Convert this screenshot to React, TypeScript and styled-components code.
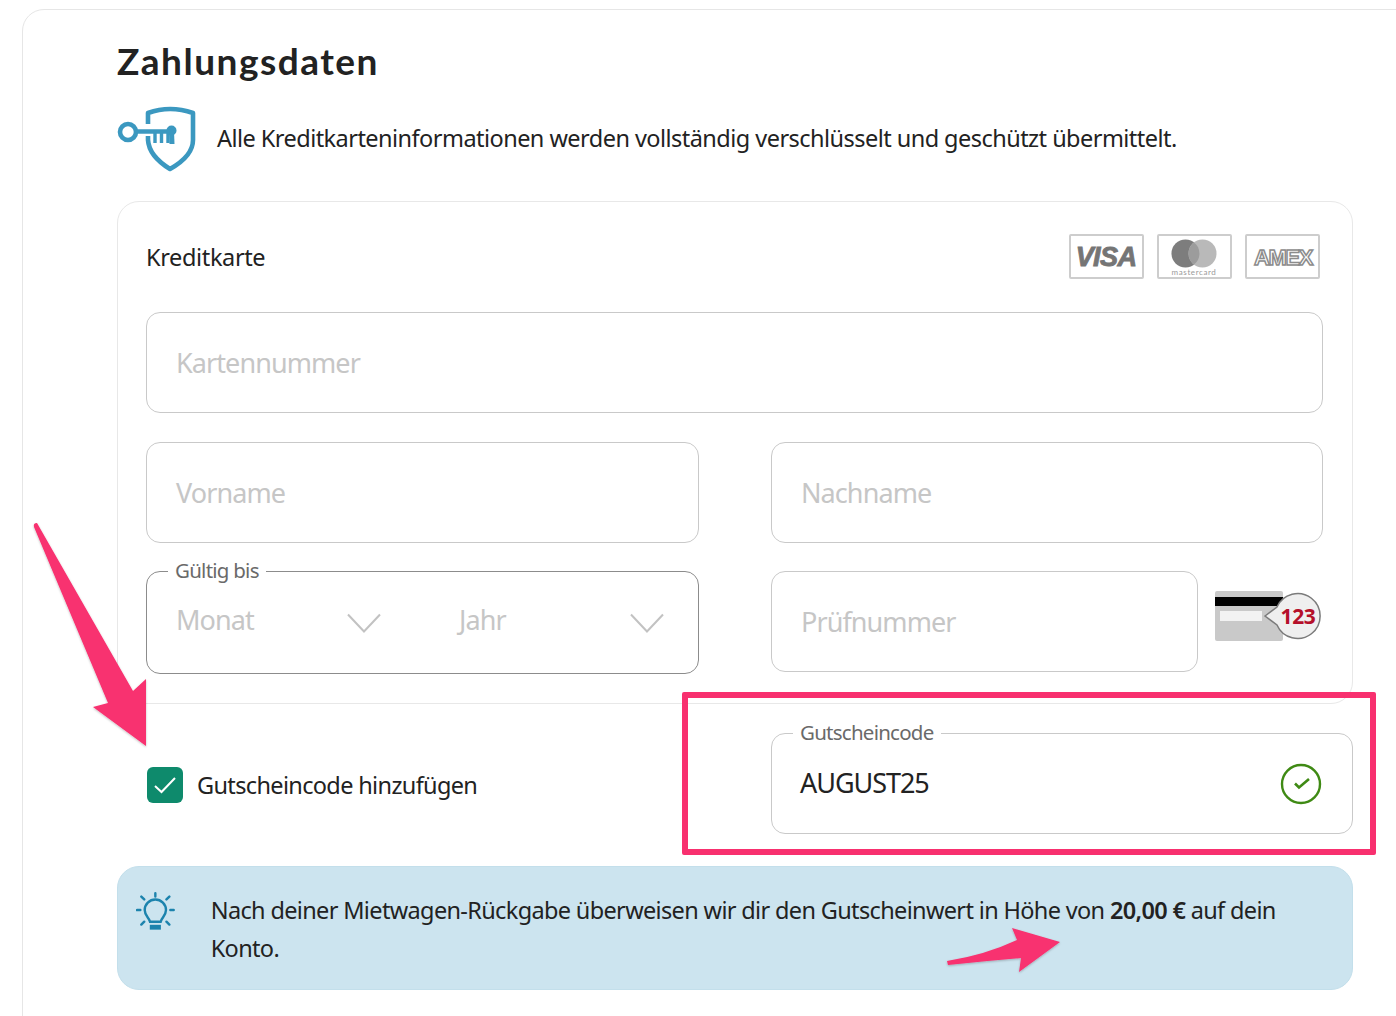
import React from "react";
import styled, { createGlobalStyle } from "styled-components";

const Global = createGlobalStyle`
  html, body { margin: 0; padding: 0; background: #fff; }
  body { font-family: "Noto Sans", "Open Sans", sans-serif; color: #222; overflow: hidden; }
  #root { width: 1396px; height: 1016px; overflow: hidden; position: relative; }
`;

const Page = styled.div`
  padding: 9px 0 0 22px;
  width: 1396px;
  height: 1016px;
  box-sizing: border-box;
  overflow: hidden;
  position: relative;
`;
const Shell = styled.section`
  width: 1420px;
  height: 1060px;
  box-sizing: border-box;
  border: 1px solid #e6e6e6;
  border-radius: 22px;
  padding: 29px 0 0 94px;
`;
const Title = styled.h1`
  margin: 0;
  height: 48px;
  font: 700 37px/44px "Lato", sans-serif;
  letter-spacing: 1.5px;
  color: #222;
`;
const SecureRow = styled.div`
  display: flex;
  align-items: center;
  height: 68px;
  margin-top: 17px;
  gap: 20px;
`;
const SecureText = styled.p`
  margin: 0;
  font-size: 23.5px;
  letter-spacing: -0.54px;
  line-height: 32px;
  color: #222;
`;
const FormCard = styled.div`
  width: 1236px;
  height: 503px;
  box-sizing: border-box;
  margin-top: 29px;
  border: 1px solid #e8e8e8;
  border-radius: 22px 22px 22px 0;
  padding: 32px 29px 0 28px;
`;
const CardHeader = styled.div`
  display: flex;
  align-items: center;
  justify-content: space-between;
  height: 45px;
  padding-right: 3px;
`;
const CardTitle = styled.h2`
  margin: 0;
  font-size: 23.5px;
  font-weight: 400;
  letter-spacing: -0.36px;
  color: #222;
`;
const Brands = styled.div`
  display: flex;
  gap: 13px;
`;
const Brand = styled.div`
  width: 75px;
  height: 45px;
  box-sizing: border-box;
  border: 2.5px solid #cdcdcd;
  border-radius: 2px;
  display: flex;
  align-items: center;
  justify-content: center;
`;
const FieldStack = styled.div`
  display: grid;
  grid-template-columns: 553px 552px;
  column-gap: 72px;
  margin-top: 33px;
`;
const Field = styled.div<{ $wide?: boolean; $gapTop?: number }>`
  position: relative;
  box-sizing: border-box;
  height: 101px;
  border: 1px solid #c9c9c9;
  border-radius: 14px;
  display: flex;
  align-items: center;
  padding: 0 29px;
  margin-top: ${(p) => p.$gapTop ?? 0}px;
  grid-column: ${(p) => (p.$wide ? "1 / -1" : "auto")};
`;
const Placeholder = styled.span`
  font-size: 27px;
  letter-spacing: -0.92px;
  color: #c6c6c6;
`;
const DatePlaceholder = styled(Placeholder)`
  margin-bottom: 6px;
`;
const DateField = styled(Field)`
  height: 103px;
  border-color: #8c8c8c;
  padding: 0 34px 0 29px;
  gap: 78px;
`;
const FloatLabel = styled.label`
  position: absolute;
  top: -15px;
  left: 21px;
  padding: 0 7px;
  background: #fff;
  font-size: 20.5px;
  line-height: 26px;
  letter-spacing: -0.75px;
  color: #6a6a6a;
`;
const Select = styled.div`
  flex: 1;
  display: flex;
  align-items: center;
  justify-content: space-between;
`;
const CvvRow = styled.div`
  display: flex;
  align-items: flex-start;
  gap: 17px;
  margin-top: 28px;
`;
const CvvField = styled(Field)`
  width: 427px;
  flex: none;
`;
const CvvArt = styled.div`
  margin-top: 18px;
  flex: none;
  height: 52px;
  display: flex;
`;
const CouponRow = styled.div`
  display: flex;
  width: 1236px;
  margin-top: 29px;
  align-items: flex-start;
`;
const CheckArea = styled.div`
  width: 654px;
  box-sizing: border-box;
  display: flex;
  align-items: center;
  gap: 14px;
  padding: 34px 0 0 30px;
`;
const CheckBox = styled.div`
  width: 36px;
  height: 36px;
  border-radius: 6px;
  background: #0e8a6c;
  display: flex;
  align-items: center;
  justify-content: center;
`;
const CheckLabel = styled.span`
  font-size: 23.5px;
  letter-spacing: -0.65px;
  color: #222;
`;
const CouponField = styled(Field)`
  width: 582px;
  justify-content: space-between;
  padding: 0 30px 0 28px;
`;
const CouponValue = styled.span`
  font-size: 27px;
  letter-spacing: -1.05px;
  margin-bottom: 2px;
  color: #222;
`;
const Banner = styled.div`
  width: 1236px;
  height: 124px;
  box-sizing: border-box;
  margin-top: 32px;
  background: #cce4ef;
  border: 1px solid #c3dfeb;
  border-radius: 22px;
  display: flex;
  padding: 24px 40px 0 18px;
  gap: 36px;
`;
const BannerText = styled.p`
  margin: 0;
  font-size: 23.5px;
  line-height: 38px;
  letter-spacing: -0.65px;
  color: #222;
  b { font-weight: 600; }
`;
const Overlay = styled.svg`
  position: absolute;
  inset: 0;
  pointer-events: none;
`;
const RedBox = styled.div`
  position: absolute;
  left: 682px;
  top: 692px;
  width: 694px;
  height: 163px;
  box-sizing: border-box;
  border: 6px solid #f8306f;
  border-radius: 2px;
`;

const Chevron = () => (
  <svg width="34" height="20" viewBox="0 0 34 20" fill="none">
    <path d="M1 1.5 L17 18.5 L33 1.5" stroke="#c2c2c2" strokeWidth="2" />
  </svg>
);

const ShieldKey = () => (
  <svg width="80" height="68" viewBox="0 0 80 68" fill="none">
    <path d="M31 20 V9 Q53 1 76 9 V36 Q76 52 53 65 Q32 52 31 36 V32" stroke="#3b98c0" strokeWidth="4.6" strokeLinejoin="round" />
    <circle cx="11" cy="28" r="8" stroke="#3b98c0" strokeWidth="4.6" />
    <path d="M20 27.5 H58" stroke="#3b98c0" strokeWidth="4.6" />
    <path d="M38 28 V39 M44.5 28 V39 M51 28 V39" stroke="#3b98c0" strokeWidth="3.4" />
    <circle cx="54.5" cy="26.5" r="5" fill="#3b98c0" />
    <path d="M52 27 H57 L57.5 40 H52.5 Z" fill="#3b98c0" />
  </svg>
);

const Bulb = () => (
  <svg width="40" height="42" viewBox="0 0 40 42" fill="none" stroke="#1c83ad" strokeWidth="2.5" strokeLinecap="round">
    <path d="M14.5 31 C13.5 27 9 25 9 19 A11 11 0 0 1 31 19 C31 25 26.5 27 25.5 31 Z" />
    <path d="M15.5 35.5 H24.5 V38 H15.5 Z" />
    <path d="M20 1.5 V5 M5.5 5 L8.5 8 M34.5 5 L31.5 8 M1 19 H4.5 M35.5 19 H39 M5.5 34 L8.5 31 M34.5 34 L31.5 31" />
  </svg>
);

const Visa = () => (
  <svg width="66" height="30" viewBox="0 0 66 30">
    <text x="32" y="24" textAnchor="middle" fontFamily="Liberation Sans" fontWeight="700" fontStyle="italic" fontSize="27" letterSpacing="-0.6" fill="#757575" stroke="#757575" strokeWidth="0.9">VISA</text>
  </svg>
);

const Master = () => (
  <svg width="64" height="40" viewBox="0 0 64 40">
    <circle cx="22.5" cy="16.5" r="14" fill="#7d7d7d" />
    <circle cx="39.5" cy="16.5" r="14" fill="#b9b9b9" />
    <path d="M31 5.4 A14 14 0 0 1 31 27.6 A14 14 0 0 1 31 5.4 Z" fill="#9c9c9c" />
    <text x="31" y="38" textAnchor="middle" fontFamily="Lato" fontSize="8" fill="#9a9a9a" letterSpacing="0.6">mastercard</text>
  </svg>
);

const Amex = () => (
  <svg width="68" height="24" viewBox="0 0 68 24">
    <text x="34" y="19.5" textAnchor="middle" fontFamily="Liberation Sans" fontWeight="700" fontSize="22" letterSpacing="-1.4" fill="#fff" stroke="#8c8c8c" strokeWidth="1.5">AMEX</text>
  </svg>
);

const Cvv = () => (
  <svg width="107" height="52" viewBox="0 0 107 52">
    <rect x="0" y="2" width="68" height="50" rx="2" fill="#c9c9c9" />
    <rect x="0" y="8" width="68" height="9" fill="#000" />
    <rect x="5" y="22" width="42" height="10" fill="#f2f2f2" />
    <path d="M50 27 L62 18 A22.5 22.5 0 1 1 62 36 Z" fill="#efefef" stroke="#7b7b7b" strokeWidth="1.5" />
    <text x="83" y="35" textAnchor="middle" fontFamily="Noto Sans" fontWeight="700" fontSize="21" letterSpacing="-0.4" fill="#b5102a">123</text>
  </svg>
);

export default function App() {
  return (
    <>
      <Global />
      <Page>
        <Shell>
          <Title>Zahlungsdaten</Title>
          <SecureRow>
            <ShieldKey />
            <SecureText>Alle Kreditkarteninformationen werden vollständig verschlüsselt und geschützt übermittelt.</SecureText>
          </SecureRow>
          <FormCard>
            <CardHeader>
              <CardTitle>Kreditkarte</CardTitle>
              <Brands>
                <Brand><Visa /></Brand>
                <Brand><Master /></Brand>
                <Brand><Amex /></Brand>
              </Brands>
            </CardHeader>
            <FieldStack>
              <Field $wide><Placeholder>Kartennummer</Placeholder></Field>
              <Field $gapTop={29}><Placeholder>Vorname</Placeholder></Field>
              <Field $gapTop={29}><Placeholder>Nachname</Placeholder></Field>
              <DateField $gapTop={28}>
                <FloatLabel>Gültig bis</FloatLabel>
                <Select><DatePlaceholder>Monat</DatePlaceholder><Chevron /></Select>
                <Select><DatePlaceholder>Jahr</DatePlaceholder><Chevron /></Select>
              </DateField>
              <CvvRow>
                <CvvField><Placeholder>Prüfnummer</Placeholder></CvvField>
                <CvvArt><Cvv /></CvvArt>
              </CvvRow>
            </FieldStack>
          </FormCard>
          <CouponRow>
            <CheckArea>
              <CheckBox>
                <svg width="24" height="20" viewBox="0 0 24 20" fill="none">
                  <path d="M2 11 L8.5 17 L22 3" stroke="#fff" strokeWidth="2" />
                </svg>
              </CheckBox>
              <CheckLabel>Gutscheincode hinzufügen</CheckLabel>
            </CheckArea>
            <CouponField>
              <FloatLabel>Gutscheincode</FloatLabel>
              <CouponValue>AUGUST25</CouponValue>
              <svg width="42" height="42" viewBox="0 0 42 42" fill="none">
                <circle cx="21" cy="21" r="19" stroke="#3f8a14" strokeWidth="2.4" />
                <path d="M15 20.5 L19 24.5 L29 16" stroke="#3f8a14" strokeWidth="2.6" />
              </svg>
            </CouponField>
          </CouponRow>
          <Banner>
            <Bulb />
            <BannerText>
              Nach deiner Mietwagen-Rückgabe überweisen wir dir den Gutscheinwert in Höhe von <b>20,00 €</b> auf dein Konto.
            </BannerText>
          </Banner>
        </Shell>
        <RedBox />
        <Overlay width="1396" height="1016" viewBox="0 0 1396 1016">
          <defs>
            <filter id="sh" x="-10%" y="-10%" width="120%" height="120%">
              <feDropShadow dx="0" dy="1" stdDeviation="1" floodColor="#000" floodOpacity="0.25" />
            </filter>
          </defs>
          <path filter="url(#sh)" fill="#f8306f" d="M37 523 L133 691 L146 679 V746 L93 707 L108 703 L34 527 Q33 523 37 523 Z" />
          <path filter="url(#sh)" fill="#f8306f" d="M947 961 Q985 955 1017 940 L1012 928 L1060 942 L1019 972 L1021 958 Q985 961 948 965 Z" />
        </Overlay>
      </Page>
    </>
  );
}
